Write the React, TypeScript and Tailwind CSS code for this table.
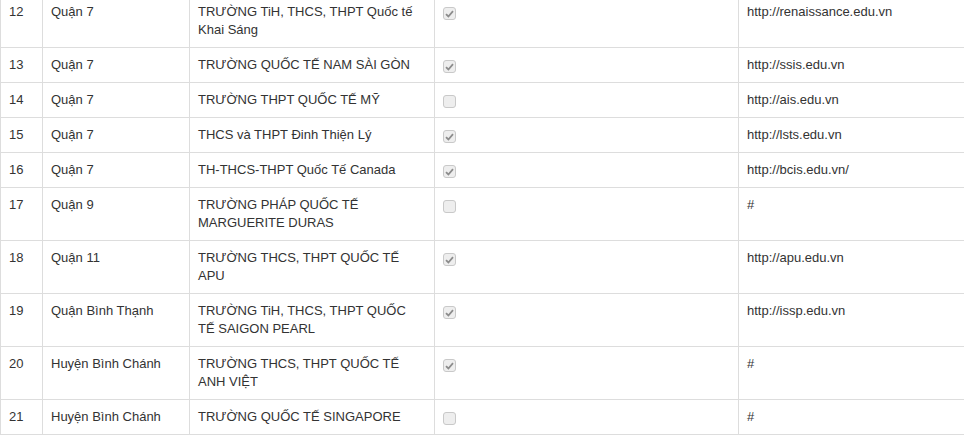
import React from "react";

type Row = { n: number; d: string; name: string[]; checked: boolean; url: string };

const rows: Row[] = [
  { n: 12, d: "Quận 7", name: ["TRƯỜNG TiH, THCS, THPT Quốc tế Khai Sáng"], checked: true, url: "http://renaissance.edu.vn" },
  { n: 13, d: "Quận 7", name: ["TRƯỜNG QUỐC TẾ NAM SÀI GÒN"], checked: true, url: "http://ssis.edu.vn" },
  { n: 14, d: "Quận 7", name: ["TRƯỜNG THPT QUỐC TẾ MỸ"], checked: false, url: "http://ais.edu.vn" },
  { n: 15, d: "Quận 7", name: ["THCS và THPT Đinh Thiện Lý"], checked: true, url: "http://lsts.edu.vn" },
  { n: 16, d: "Quận 7", name: ["TH-THCS-THPT Quốc Tế Canada"], checked: true, url: "http://bcis.edu.vn/" },
  { n: 17, d: "Quận 9", name: ["TRƯỜNG PHÁP QUỐC TẾ MARGUERITE DURAS"], checked: false, url: "#" },
  { n: 18, d: "Quận 11", name: ["TRƯỜNG THCS, THPT QUỐC TẾ APU"], checked: true, url: "http://apu.edu.vn" },
  { n: 19, d: "Quận Bình Thạnh", name: ["TRƯỜNG TiH, THCS, THPT QUỐC", "TẾ SAIGON PEARL"], checked: true, url: "http://issp.edu.vn" },
  { n: 20, d: "Huyện Bình Chánh", name: ["TRƯỜNG THCS, THPT QUỐC TẾ ANH VIỆT"], checked: true, url: "#" },
  { n: 21, d: "Huyện Bình Chánh", name: ["TRƯỜNG QUỐC TẾ SINGAPORE"], checked: false, url: "#" },
];

function Box({ checked }: { checked: boolean }) {
  return (
    <div className="mt-[4px] w-[13px] h-[13px] rounded-[3px] border border-[#c9c9c9] bg-[#eeeeee] flex items-center justify-center">
      {checked && (
        <svg width="9" height="8" viewBox="0 0 9 8">
          <path d="M1 4.2 L3.4 6.5 L8 1.2" fill="none" stroke="#8c8c8c" strokeWidth="1.8" />
        </svg>
      )}
    </div>
  );
}

export default function App() {
  const td = "border border-[#dddddd] px-[8px] py-[8px] align-top";
  return (
    <div className="w-[964px] h-[443px] overflow-hidden bg-white">
      <table
        className="-mt-[6px] border-collapse table-fixed w-[1100px] text-[13px] leading-[18px] text-[#333333]"
        style={{ fontFamily: '"Liberation Sans", Arial, sans-serif' }}
      >
        <colgroup>
          <col className="w-[42px]" />
          <col className="w-[147px]" />
          <col className="w-[245px]" />
          <col className="w-[304px]" />
          <col />
        </colgroup>
        <tbody>
          {rows.map((r) => (
            <tr key={r.n}>
              <td className={td}>{r.n}</td>
              <td className={td}>{r.d}</td>
              <td className={td}>
                {r.name.map((l, i) => (
                  <React.Fragment key={i}>
                    {i > 0 && <br />}
                    {l}
                  </React.Fragment>
                ))}
              </td>
              <td className={td}>
                <Box checked={r.checked} />
              </td>
              <td className={td}>{r.url}</td>
            </tr>
          ))}
        </tbody>
      </table>
    </div>
  );
}
